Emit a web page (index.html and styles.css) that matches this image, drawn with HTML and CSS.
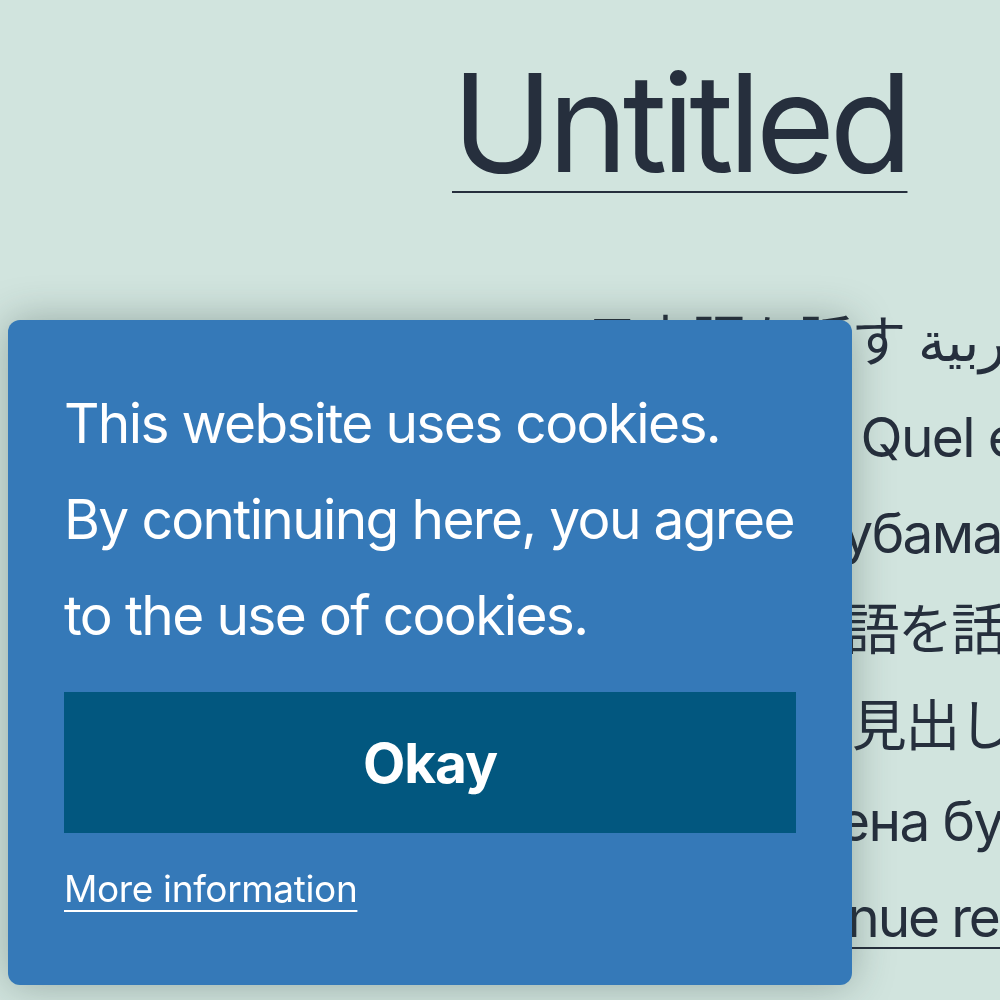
FILE: index.html
```html
<!DOCTYPE html>
<html lang="en">
<head>
<meta charset="utf-8">
<title>Untitled</title>
<link rel="stylesheet" href="styles.css">
</head>
<body>
<main class="page">
  <h1 class="title"><a href="#" class="title-link">Untitled</a></h1>
  <p class="text">
    <span class="line">Text: 日本語を話す العربية</span>
    <span class="line">En bon français, Quel est votre nom ?</span>
    <span class="line">Русская речь Кубамашина</span>
    <span class="line">Nihongo or 日本語を話します</span>
    <span class="line">header 日本語の見出し</span>
    <span class="line">Завтра новая цена будет</span>
    <span class="line"><a href="#" class="more">Tap now to continue reading</a></span>
  </p>
</main>

<div class="cookie" role="dialog" aria-label="Cookie notice">
  <p class="cookie-text">This website uses cookies.</p>
  <p class="cookie-text">By continuing here, you agree to the use of cookies.</p>
  <button class="cookie-btn" type="button">Okay</button>
  <a href="#" class="cookie-link">More information</a>
</div>
</body>
</html>
```
FILE: styles.css
```css
html, body {
  margin: 0;
  padding: 0;
}
body {
  background: #d1e4de;
  color: #262f3d;
  font-family: Inter, "Noto Sans CJK JP", "Noto Sans", sans-serif;
  overflow: hidden;
  height: 1000px;
}
.page {
  padding-left: 452px;
  padding-top: 23px;
}
.title {
  margin: 0;
  font-size: 136px;
  font-weight: 400;
  line-height: 200px;
  letter-spacing: -0.04em;
}
.title-link {
  color: inherit;
  text-decoration: underline;
  text-decoration-thickness: 2px;
  text-underline-offset: 19px;
}
.text {
  margin: 70px 0 0;
  font-size: 55px;
  line-height: 96px;
  letter-spacing: -0.03em;
  white-space: nowrap;
}
.line {
  display: block;
}
.more {
  color: inherit;
  letter-spacing: -0.04em;
  text-decoration-thickness: 2px;
  text-underline-offset: 10px;
}
.cookie {
  position: fixed;
  left: 8px;
  bottom: 15px;
  width: 740px;
  height: 610px;
  padding: 55px 48px 0 56px;
  background: #3579b8;
  color: #fff;
  border-radius: 12px;
  box-shadow: 0 0 40px rgba(40, 60, 55, 0.35);
}
.cookie-text {
  margin: 0;
  font-size: 55px;
  line-height: 96px;
  letter-spacing: -0.03em;
}
.cookie-btn {
  display: block;
  width: 732px;
  margin-top: 29px;
  height: 141px;
  border: 0;
  border-radius: 0;
  background: #02577f;
  color: #fff;
  font-family: inherit;
  font-size: 55px;
  font-weight: 700;
  letter-spacing: -0.02em;
}
.cookie-link {
  display: inline-block;
  margin-top: 33px;
  color: #fff;
  font-size: 37px;
  letter-spacing: -0.01em;
  text-decoration-thickness: 2px;
  text-underline-offset: 8px;
}
```
